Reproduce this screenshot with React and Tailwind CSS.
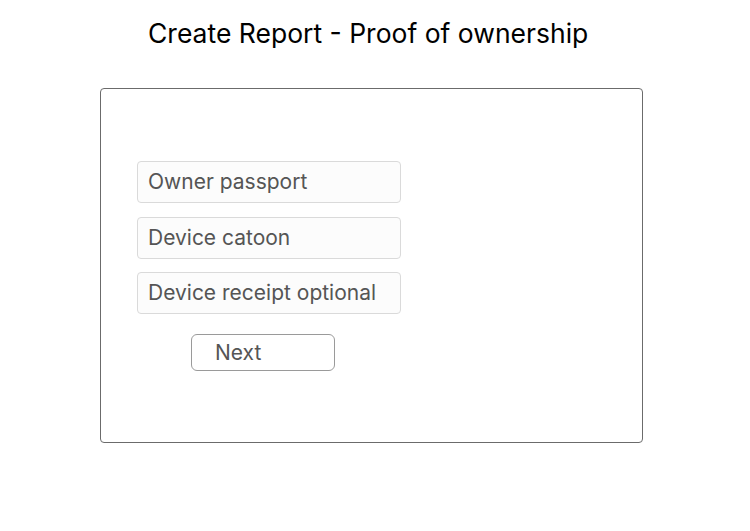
import React from 'react';

const fields = ['Owner passport', 'Device catoon', 'Device receipt optional'];

const App = () => {
  return (
    <div className="w-[750px] h-[531px] bg-white font-['Inter',sans-serif]">
      <h1 className="pt-[15px] pl-[148px] text-[26.5px] leading-[36px] text-black">
        Create Report - Proof of ownership
      </h1>

      <div className="mt-[37px] ml-[100px] w-[543px] h-[355px] border border-[#6b6b6b] rounded-[4px] pt-[72px] pl-[36px]">
        <div className="flex flex-col gap-[13.5px]">
          {fields.map((f) => (
            <div
              key={f}
              className="w-[264px] h-[42px] bg-[#fcfcfc] border border-[#dadada] rounded-[4px] pl-[10px] flex items-center text-[21px] text-[#555555]"
            >
              {f}
            </div>
          ))}
        </div>
        <button className="mt-[20px] ml-[54px] w-[144px] h-[37px] border border-[#9a9a9a] rounded-[6px] text-left pl-[23px] text-[21px] text-[#555555]">
          Next
        </button>
      </div>
    </div>
  );
};

export default App;
